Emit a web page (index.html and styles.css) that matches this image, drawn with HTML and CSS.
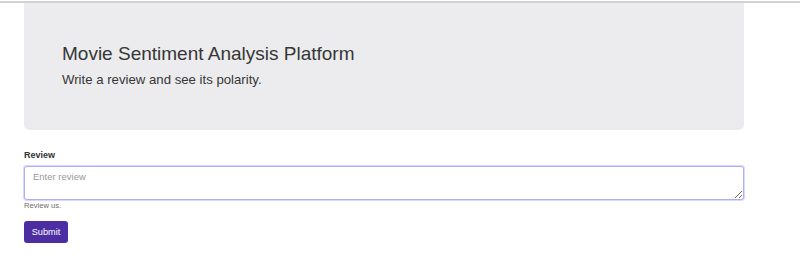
FILE: index.html
```html
<!DOCTYPE html>
<html lang="en">

<head>
  <meta charset="UTF-8">
  <meta name="viewport" content="width=device-width, initial-scale=1.0">
  <title>Movie Sentiment Analysis</title>
  <link rel="stylesheet" href="styles.css">
</head>

<body>
  <div class="topline"></div>
  <div class="container">
    <div class="jumbotron">
      <h1 class="title">Movie Sentiment Analysis Platform</h1>
      <p class="lead">Write a review and see its polarity.</p>
    </div>

    <form class="review-form">
      <label class="field-label" for="review">Review</label>
      <textarea id="review" class="field" placeholder="Enter review"></textarea>
      <small class="hint">Review us.</small>
      <button type="submit" class="btn">Submit</button>
    </form>
  </div>
</body>

</html>
```

FILE: styles.css
```css
* {
  margin: 0;
  padding: 0;
  box-sizing: border-box;
}

body {
  font-family: "Liberation Sans", Arial, sans-serif;
  color: #363636;
  background: #ffffff;
}

.topline {
  height: 3px;
  border-top: 1px solid #ffffff;
  background: #d3d3d5;
}

.container {
  width: 720px;
  margin: 0 0 0 24px;
}

.jumbotron {
  height: 127px;
  background: #ececee;
  border-radius: 0 0 5px 5px;
  padding: 39px 38px 0;
}

.title {
  font-size: 19px;
  font-weight: normal;
  line-height: 24px;
  color: #363636;
}

.lead {
  font-size: 13.2px;
  line-height: 16px;
  margin-top: 6px;
  color: #363636;
}

.review-form {
  display: flex;
  flex-direction: column;
  align-items: flex-start;
  padding-top: 19px;
}

.field-label {
  font-size: 9px;
  font-weight: bold;
  line-height: 12px;
  color: #333333;
}

.field {
  width: 720px;
  height: 34px;
  margin-top: 5px;
  padding: 4px 8px;
  border: 1px solid #aeaef6;
  border-radius: 3px;
  box-shadow: 0 0 0 1px #d8d8fb;
  font-family: "Liberation Sans", Arial, sans-serif;
  font-size: 9.5px;
  color: #333333;
  outline: none;
  resize: vertical;
}

.field::placeholder {
  color: #9a9a9a;
}

.hint {
  font-size: 7.6px;
  line-height: 10px;
  margin-top: 1px;
  color: #6c6c6c;
}

.btn {
  margin-top: 10px;
  width: 44px;
  height: 22px;
  border: none;
  border-radius: 3px;
  background: #4d2ea2;
  color: #ffffff;
  font-family: "Liberation Sans", Arial, sans-serif;
  font-size: 9.2px;
}
```
